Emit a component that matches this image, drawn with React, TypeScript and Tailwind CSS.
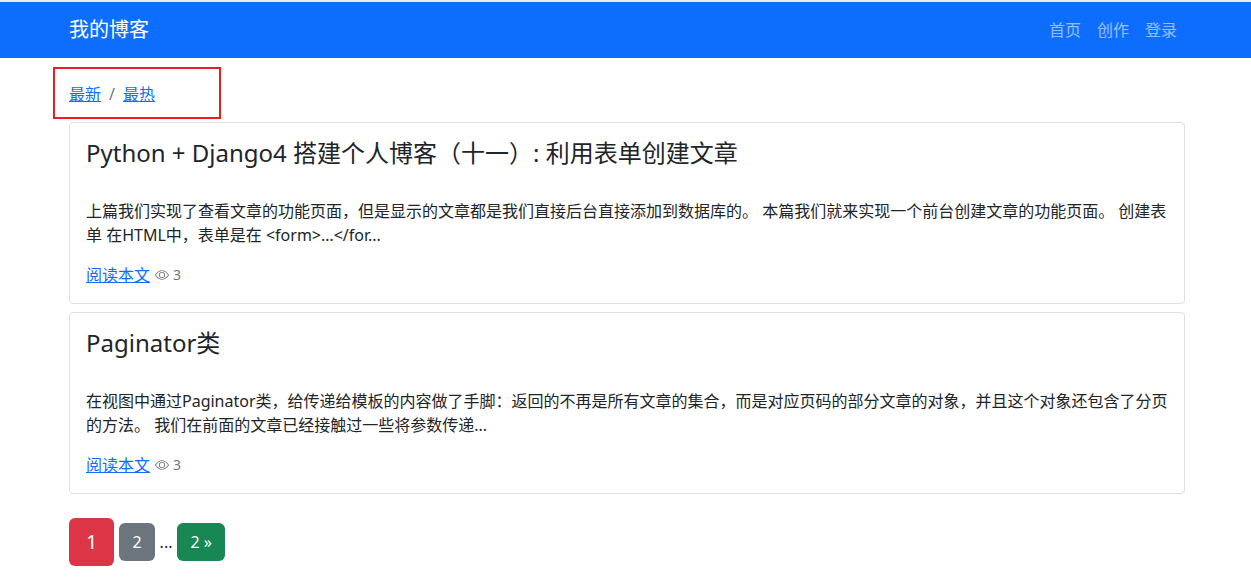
type Article = { title: string; body: string; views: number };

const articles: Article[] = [
  {
    title: 'Python + Django4 搭建个人博客（十一）: 利用表单创建文章',
    body: '上篇我们实现了查看文章的功能页面，但是显示的文章都是我们直接后台直接添加到数据库的。 本篇我们就来实现一个前台创建文章的功能页面。 创建表单 在HTML中，表单是在 <form>…</for...',
    views: 3,
  },
  {
    title: 'Paginator类',
    body: '在视图中通过Paginator类，给传递给模板的内容做了手脚：返回的不再是所有文章的集合，而是对应页码的部分文章的对象，并且这个对象还包含了分页的方法。 我们在前面的文章已经接触过一些将参数传递...',
    views: 3,
  },
];

function EyeIcon() {
  return (
    <svg width="14" height="14" viewBox="0 0 16 16" fill="currentColor" aria-hidden="true">
      <path d="M16 8s-3-5.5-8-5.5S0 8 0 8s3 5.5 8 5.5S16 8 16 8M1.173 8a13 13 0 0 1 1.66-2.043C4.12 4.668 5.88 3.5 8 3.5s3.879 1.168 5.168 2.457A13 13 0 0 1 14.828 8q-.086.13-.195.288c-.335.48-.83 1.12-1.465 1.755C11.879 11.332 10.119 12.5 8 12.5s-3.879-1.168-5.168-2.457A13 13 0 0 1 1.172 8z" />
      <path d="M8 5.5a2.5 2.5 0 1 0 0 5 2.5 2.5 0 0 0 0-5M4.5 8a3.5 3.5 0 1 1 7 0 3.5 3.5 0 0 1-7 0" />
    </svg>
  );
}

function ArticleCard({ title, body, views }: Article) {
  return (
    <article className="rounded border border-[#dfdfdf] bg-white p-4">
      <h2 className="mb-8 text-2xl leading-7">{title}</h2>
      <p className="mb-4">{body}</p>
      <div className="flex items-center">
        <a href="#" className="text-[#0d6efd] underline">阅读本文</a>
        <span className="ml-[5px] flex items-center gap-1 text-sm text-[#777]">
          <EyeIcon />
          {views}
        </span>
      </div>
    </article>
  );
}

export default function App() {
  return (
    <div className="min-h-screen bg-white font-['Noto_Sans','Noto_Sans_CJK_SC',sans-serif] text-base text-[#212529]" lang="zh-CN">
      <header className="border-t-2 border-[#e9edf2] bg-[#0d6efd] pl-[3px]">
        <nav className="mx-auto flex h-14 max-w-[1140px] items-center justify-between px-3">
          <a href="#" className="text-xl text-white">我的博客</a>
          <div className="flex gap-4 pr-2 text-white/55">
            <a href="#">首页</a>
            <a href="#">创作</a>
            <a href="#">登录</a>
          </div>
        </nav>
      </header>

      <div className="pl-[3px]">
        <main className="mx-auto max-w-[1140px] px-3 pt-[9px] pb-5">
          <nav aria-label="排序" className="mb-[3px] -ml-4 flex h-[52px] w-[168px] items-center gap-2 border-2 border-[#ed1c24] px-3.5 pt-0.5">
            <a href="#" className="text-[#0d6efd] underline">最新</a>
            <span className="text-[#6c757d]">/</span>
            <a href="#" className="text-[#0d6efd] underline">最热</a>
          </nav>

          <div className="flex flex-col gap-2">
            {articles.map((article) => (
              <ArticleCard key={article.title} {...article} />
            ))}
          </div>

          <nav aria-label="分页" className="mt-6 flex items-center gap-[5px]">
            <a href="#" aria-current="page" className="rounded-md bg-[#dc3545] px-[17px] py-2 text-xl leading-8 text-white">1</a>
            <a href="#" className="rounded-md bg-[#6c757d] px-[13px] py-[7px] text-white">2</a>
            <span>...</span>
            <a href="#" className="rounded-md bg-[#198754] px-[13px] py-[7px] text-white">2 »</a>
          </nav>
        </main>
      </div>
    </div>
  );
}
